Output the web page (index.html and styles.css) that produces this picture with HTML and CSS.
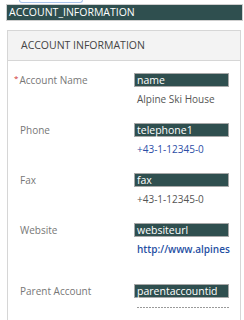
FILE: index.html
```html
<html>
<head>
    <title>Account Information</title>
    <link rel="stylesheet" href="styles.css">
</head>
<body>

    <div class="tabEdge"></div>
    <div class="darkBar">ACCOUNT_INFORMATION</div>

    <div class="panel">
        <div class="panelHead">ACCOUNT INFORMATION</div>
        <div class="panelBody">
            <div class="row">
                <div class="label"><span class="req">*</span>Account Name</div>
                <div class="field">
                    <div class="tag">name</div>
                    <div class="value">Alpine Ski House</div>
                </div>
            </div>
            <div class="row">
                <div class="label">Phone</div>
                <div class="field">
                    <div class="tag">telephone1</div>
                    <div class="value link">+43-1-12345-0</div>
                </div>
            </div>
            <div class="row">
                <div class="label">Fax</div>
                <div class="field">
                    <div class="tag">fax</div>
                    <div class="value">+43-1-12345-0</div>
                </div>
            </div>
            <div class="row tall">
                <div class="label">Website</div>
                <div class="field">
                    <div class="tag">websiteurl</div>
                    <div class="value url">http://www.alpines</div>
                </div>
            </div>
            <div class="row">
                <div class="label">Parent Account</div>
                <div class="field">
                    <div class="tag">parentaccountid</div>
                    <div class="dashes"></div>
                </div>
            </div>
        </div>
    </div>

</body>
</html>
```

FILE: styles.css
```css
body {
    margin: 0;
    background-color: white;
    font-family: 'Open Sans', 'Noto Sans', sans-serif;
    font-size: 10px;
}

.tabEdge {
    margin-left: 19px;
    width: 62px;
    height: 2px;
    border: 1px solid #a9c4ec;
    border-top: none;
    border-radius: 0 0 3px 3px;
}

.darkBar {
    margin: 1px 1px 0 6px;
    height: 15px;
    line-height: 15px;
    padding-left: 2px;
    background-color: #2f4f4f;
    border: 1px solid #cfcfcf;
    color: white;
    font-size: 10.5px;
    white-space: nowrap;
}

.panel {
    margin: 9px 0 0 7px;
    width: 232px;
    border: 1px solid #d6d6d6;
    border-bottom: none;
}

.panelHead {
    height: 29px;
    line-height: 29px;
    padding-left: 13px;
    background-color: #f3f3f3;
    border-bottom: 1px solid #d6d6d6;
    color: #444;
    font-size: 10.5px;
}

.panelBody {
    padding-top: 12px;
}

.row {
    display: grid;
    grid-template-columns: 126px 95px;
    height: 50px;
}

.row.tall {
    height: 61px;
}

.label {
    padding-left: 12px;
    line-height: 14px;
    color: #777;
}

.req {
    color: #d03030;
    font-size: 8px;
    vertical-align: top;
    line-height: 10px;
    margin-left: -6px;
    margin-right: 1px;
}

.field {
    display: flex;
    flex-direction: column;
}

.tag {
    height: 12px;
    line-height: 12px;
    padding-left: 2px;
    background-color: #2f4f4f;
    border: 1px solid #a8a8a8;
    color: white;
    font-size: 10.5px;
}

.value {
    margin-top: 5px;
    padding-left: 3px;
    line-height: 14px;
    color: #555;
    white-space: nowrap;
}

.value.link {
    color: #2c4ea6;
}

.value.url {
    color: #1f4fa3;
    font-weight: 600;
}

.dashes {
    margin: 9px 0 0 3px;
    height: 1px;
    background: repeating-linear-gradient(to right, #9a9a9a 0, #9a9a9a 2px, transparent 2px, transparent 3px);
}
```
